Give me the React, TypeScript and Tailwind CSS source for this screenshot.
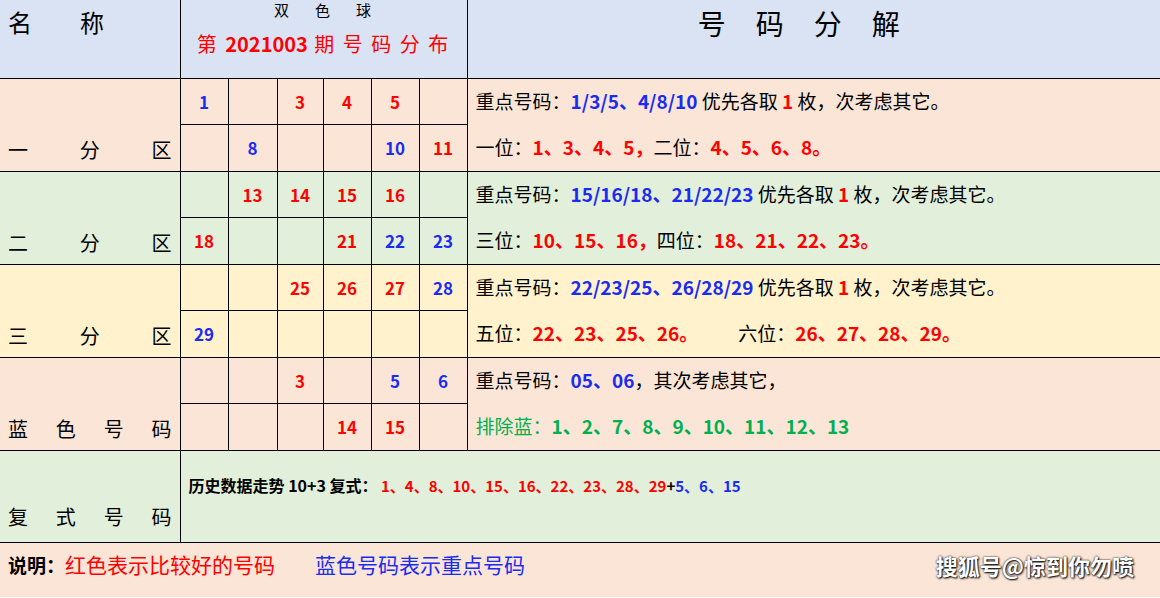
const F = { fontFamily: '"Noto Sans CJK SC", "Liberation Sans", sans-serif' };
const N = 'font-bold [font-family:"Liberation_Sans","Noto_Sans_CJK_SC",sans-serif]';

type Cell = [string, 'r' | 'b'] | null;

const zones: { label: string[]; bg: string; rows: Cell[][]; right: React.ReactNode[] }[] = [
  {
    label: ['一', '分', '区'],
    bg: 'bg-[#fbe5d6]',
    rows: [
      [['1', 'b'], null, ['3', 'r'], ['4', 'r'], ['5', 'r'], null],
      [null, ['8', 'b'], null, null, ['10', 'b'], ['11', 'r']],
    ],
    right: [
      <>重点号码：<B>1/3/5、4/8/10</B> 优先各取 <R>1</R> 枚，次考虑其它。</>,
      <>一位：<R>1、3、4、5，</R>二位：<R>4、5、6、8。</R></>,
    ],
  },
  {
    label: ['二', '分', '区'],
    bg: 'bg-[#e2efda]',
    rows: [
      [null, ['13', 'r'], ['14', 'r'], ['15', 'r'], ['16', 'r'], null],
      [['18', 'r'], null, null, ['21', 'r'], ['22', 'b'], ['23', 'b']],
    ],
    right: [
      <>重点号码：<B>15/16/18、21/22/23</B> 优先各取 <R>1</R> 枚，次考虑其它。</>,
      <>三位：<R>10、15、16，</R>四位：<R>18、21、22、23。</R></>,
    ],
  },
  {
    label: ['三', '分', '区'],
    bg: 'bg-[#fff2cc]',
    rows: [
      [null, null, ['25', 'r'], ['26', 'r'], ['27', 'r'], ['28', 'b']],
      [['29', 'b'], null, null, null, null, null],
    ],
    right: [
      <>重点号码：<B>22/23/25、26/28/29</B> 优先各取 <R>1</R> 枚，次考虑其它。</>,
      <>五位：<R>22、23、25、26。</R><span className="inline-block w-[40px]" />六位：<R>26、27、28、29。</R></>,
    ],
  },
  {
    label: ['蓝', '色', '号', '码'],
    bg: 'bg-[#fbe5d6]',
    rows: [
      [null, null, ['3', 'r'], null, ['5', 'b'], ['6', 'b']],
      [null, null, null, ['14', 'r'], ['15', 'r'], null],
    ],
    right: [
      <>重点号码：<B>05、06</B>，其次考虑其它，</>,
      <span className="text-[#00b050]">排除蓝：<span className={N}>1、2、7、8、9、10、11、12、13</span></span>,
    ],
  },
];

function R({ children }: { children: React.ReactNode }) {
  return <span className={`${N} text-[#ff0000]`}>{children}</span>;
}
function B({ children }: { children: React.ReactNode }) {
  return <span className={`${N} text-[#1a2cf0]`}>{children}</span>;
}

const widths = ['w-[180px]', 'w-[48px]', 'w-[49px]', 'w-[46px]', 'w-[48px]', 'w-[48px]', 'w-[48px]', ''];

export default function App() {
  return (
    <div className="w-[1160px] h-[598px] overflow-hidden bg-white text-black" style={F}>
      <table className="w-full table-fixed border-collapse">
        <colgroup>
          {widths.map((w, i) => <col key={i} className={w} />)}
        </colgroup>
        <tbody>
          <tr className="h-[78px] bg-[#dae3f3]">
            <td className="border-r border-b border-black align-top pl-[8px] pt-[4px] text-[24px]">名<span className="inline-block w-[48px]" />称</td>
            <td colSpan={6} className="border border-black border-t-0 text-center align-top">
              <div className="text-[15px] tracking-[26px] pl-[24px] pt-[1px] leading-[18px]">双色球</div>
              <div className="text-[20px] text-[#ff0000] mt-[10px] tracking-[2px]">
                第 <span className={`${N} tracking-normal`}>2021003</span> 期 号 码 分 布
              </div>
            </td>
            <td className="border-b border-black align-top text-center text-[28px] pt-[2px] tracking-[30px]">号码分解</td>
          </tr>
          {zones.map((z, zi) =>
            z.rows.map((row, ri) => (
              <tr key={`${zi}-${ri}`} className={`h-[46.5px] ${z.bg}`}>
                {ri === 0 && (
                  <td rowSpan={2} className="border-r border-b border-black align-bottom px-[8px] pb-[6px]">
                    <div className="flex justify-between text-[20px]">
                      {z.label.map((c, i) => <span key={i}>{c}</span>)}
                    </div>
                  </td>
                )}
                {row.map((c, ci) => (
                  <td key={ci} className={`border border-black text-center text-[17px] ${N} ${c && c[1] === 'r' ? 'text-[#ff0000]' : 'text-[#1a2cf0]'}`}>
                    {c ? c[0] : ''}
                  </td>
                ))}
                <td className={`pl-[8px] text-[19px] whitespace-nowrap ${ri === 1 ? 'border-b border-black' : ''}`}>{z.right[ri]}</td>
              </tr>
            ))
          )}
          <tr className="h-[92px] bg-[#e2efda]">
            <td className="border-r border-b border-black align-bottom px-[8px] pb-[10px]">
              <div className="flex justify-between text-[20px]"><span>复</span><span>式</span><span>号</span><span>码</span></div>
            </td>
            <td colSpan={7} className="border-b border-black align-top pl-[8px] pt-[22px] text-[16px] font-bold">
              历史数据走势 <span className={N}>10+3</span> 复式：
              <span className={`${N} text-[#ff0000] text-[15px]`}> 1、4、8、10、15、16、22、23、28、29</span>
              <span className={`${N} text-[15px]`}>+</span>
              <span className={`${N} text-[#1a2cf0] text-[15px]`}>5、6、15</span>
            </td>
          </tr>
          <tr className="h-[55px] bg-[#fbe5d6]">
            <td colSpan={8} className="align-top pt-[6px] pl-[8px]">
              <div className="flex items-center text-[21px]">
                <span className="font-bold text-[19px]">说明：</span>
                <span className="text-[#ff0000]">红色表示比较好的号码</span>
                <span className="text-[#1a2cf0] ml-[40px]">蓝色号码表示重点号码</span>
                <span className="ml-auto mr-[26px] text-white font-bold text-[22px] [text-shadow:0_0_2px_#000,1px_1px_2px_#000]">搜狐号@惊到你勿喷</span>
              </div>
            </td>
          </tr>
        </tbody>
      </table>
    </div>
  );
}
